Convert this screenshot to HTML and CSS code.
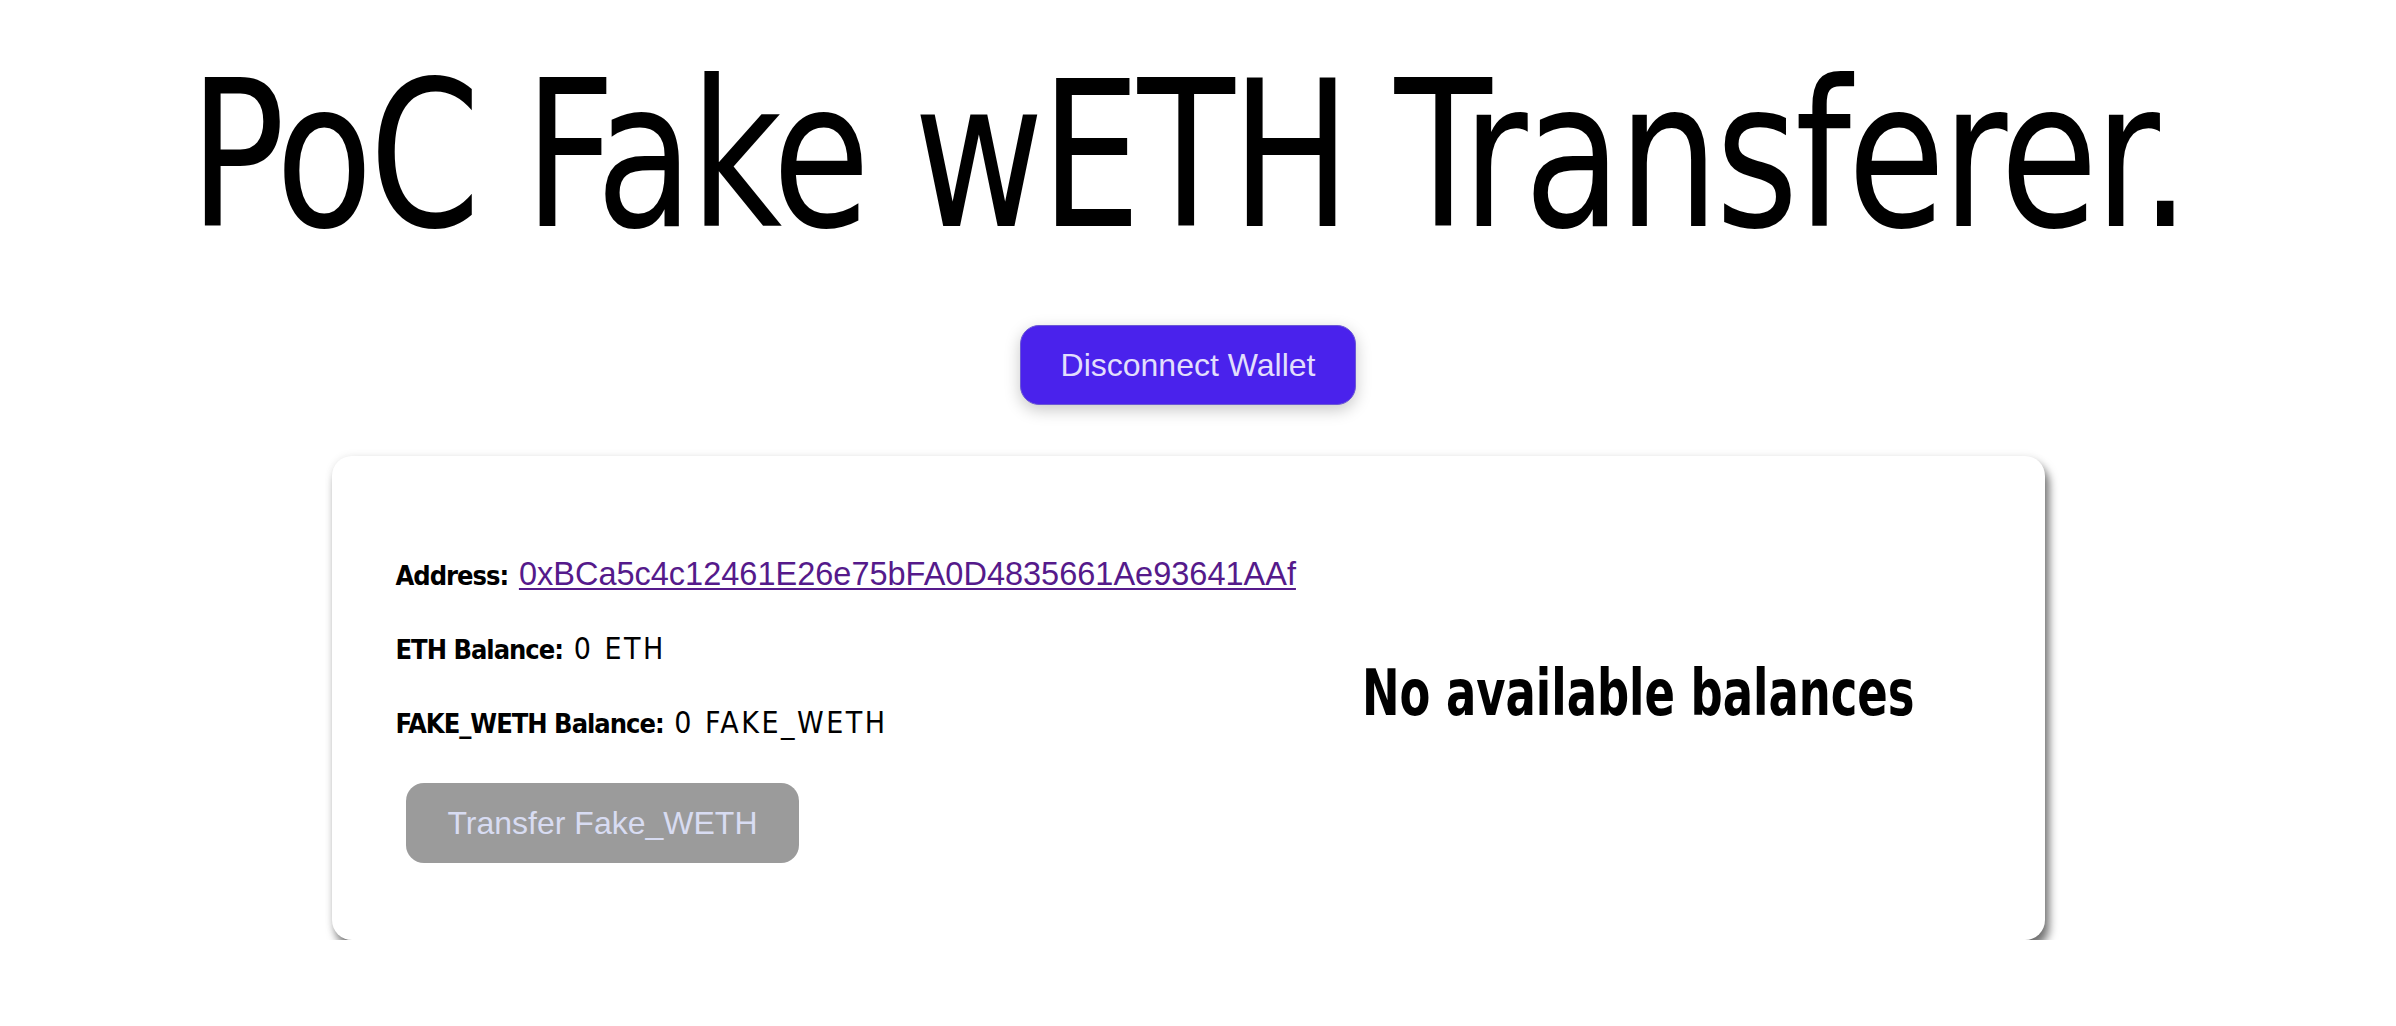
FILE: index.html
```html
<!DOCTYPE html>
<html lang="en">
<head>
<meta charset="utf-8">
<title>PoC Fake wETH Transferer</title>
<link rel="stylesheet" href="styles.css">
</head>
<body>
<div class="page">
  <h1 class="title">PoC Fake wETH Transferer.</h1>
  <div class="actions">
    <button class="btn-wallet" type="button">Disconnect Wallet</button>
  </div>
  <section class="card">
    <div class="info">
      <p class="row"><span class="label">Address:</span> <a class="addr" href="#">0xBCa5c4c12461E26e75bFA0D4835661Ae93641AAf</a></p>
      <p class="row"><span class="label">ETH Balance:</span> <span class="value">0 ETH</span></p>
      <p class="row"><span class="label">FAKE_WETH Balance:</span> <span class="value">0 FAKE_WETH</span></p>
      <button class="btn-transfer" type="button" disabled>Transfer Fake_WETH</button>
    </div>
    <div class="balances">
      <h2 class="empty">No available balances</h2>
    </div>
  </section>
</div>
</body>
</html>
```
FILE: styles.css
```css
html, body {
  margin: 0;
  padding: 0;
  background: #ffffff;
}

.page {
  display: flex;
  flex-direction: column;
  align-items: center;
  padding-right: 20px;
  font-family: "DejaVu Sans Condensed", "Liberation Sans", sans-serif;
  color: #000;
}

.title {
  margin: 54px 0 0;
  font-family: "DejaVu Sans Condensed", sans-serif;
  font-weight: 400;
  font-size: 204px;
  line-height: 204px;
  letter-spacing: -4px;
  white-space: nowrap;
  transform: scaleX(0.867);
}

.actions {
  margin-top: 67px;
}

.btn-wallet {
  box-sizing: border-box;
  height: 80px;
  padding: 0 40px;
  font-family: "Liberation Sans", Arial, sans-serif;
  font-size: 32px;
  line-height: 36px;
  color: #e2defc;
  background: #4a22ec;
  border: 1px solid #6b58d4;
  border-radius: 19px;
  box-shadow: 0 5px 16px rgba(0, 0, 0, 0.22);
  cursor: pointer;
}

.card {
  box-sizing: border-box;
  width: 1713px;
  margin-top: 51px;
  padding: 102px 64px 77px 64px;
  background: #fff;
  border-radius: 20px;
  box-shadow: 4px 8px 10px rgba(0, 0, 0, 0.55), 0 0 8px rgba(0, 0, 0, 0.08);
  display: grid;
  grid-template-columns: 888px 1fr;
}

.info {
  display: flex;
  flex-direction: column;
  align-items: flex-start;
}

.row {
  margin: 0 0 38px;
  font-size: 27px;
  line-height: 36px;
  height: 36px;
  white-space: nowrap;
}

.label {
  font-weight: 700;
  letter-spacing: -1px;
  margin-right: 3px;
}

.value {
  font-weight: 400;
  font-size: 30px;
  line-height: 1;
  letter-spacing: 2.5px;
}

.addr {
  font-family: "Liberation Sans", Arial, sans-serif;
  font-size: 32.5px;
  line-height: 1;
  color: #551a8b;
  text-decoration: underline;
  text-decoration-thickness: 2px;
  text-underline-offset: 3px;
}

.btn-transfer {
  box-sizing: border-box;
  height: 80px;
  margin: 3px 0 0 10px;
  padding: 0 42px;
  font-family: "Liberation Sans", Arial, sans-serif;
  font-size: 32px;
  line-height: 36px;
  color: #d8dcf2;
  background: #9b9b9b;
  border: none;
  border-radius: 18px;
}

.balances {
  text-align: center;
}

.empty {
  margin: 97px 0 0;
  font-size: 64px;
  line-height: 1.2;
  font-weight: 700;
  white-space: nowrap;
  transform: scaleX(0.78);
}
```
